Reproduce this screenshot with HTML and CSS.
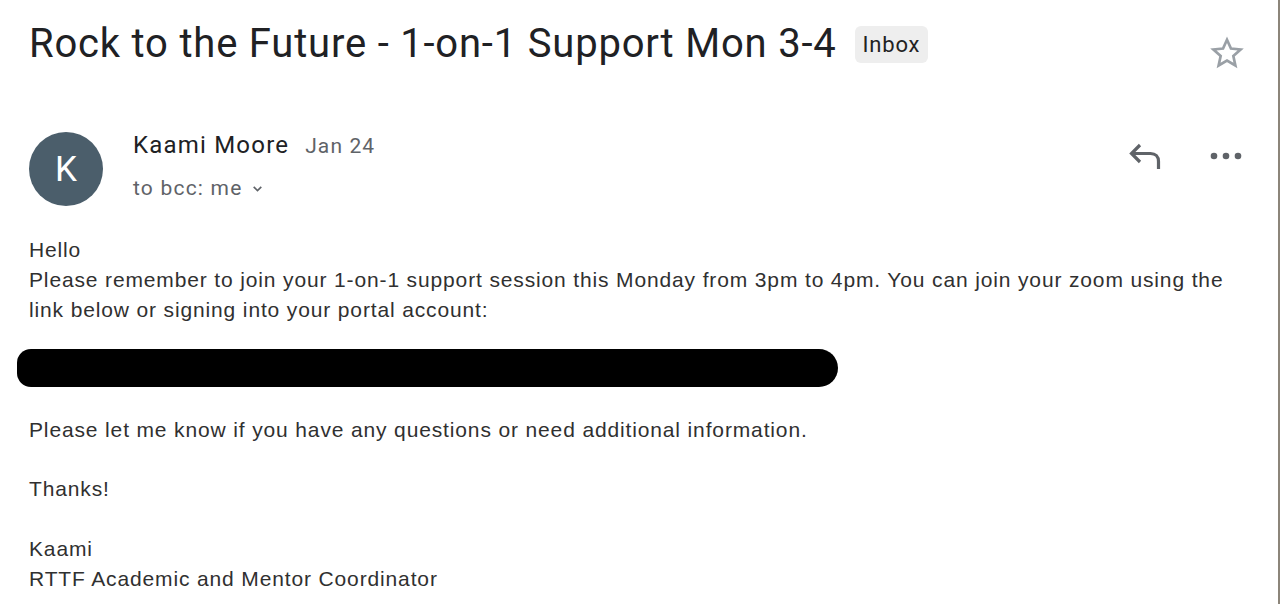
FILE: index.html
```html
<!DOCTYPE html>
<html>
<head>
<meta charset="utf-8">
<link rel="stylesheet" href="styles.css">
</head>
<body>
<div class="page">
  <div class="subject-row">
    <h1 class="subject">Rock to the Future - 1-on-1 Support Mon 3-4</h1>
    <span class="chip">Inbox</span>
    <span class="spacer"></span>
    <svg class="star" viewBox="0 0 24 24" width="38" height="38"><path d="M12 3.6l2.5 5.6 6.1.6-4.6 4.1 1.3 6-5.3-3.1-5.3 3.1 1.3-6-4.6-4.1 6.1-.6z" fill="none" stroke="#9aa0a6" stroke-width="1.7" stroke-linejoin="miter"/></svg>
  </div>
  <div class="sender-row">
    <div class="avatar">K</div>
    <div class="meta">
      <div class="from"><span class="name">Kaami Moore</span><span class="date">Jan 24</span></div>
      <div class="to">to bcc: me <svg class="caret" viewBox="0 0 12 12" width="13" height="13"><path d="M2.5 4.5l3.5 3.5 3.5-3.5" fill="none" stroke="#5f6368" stroke-width="1.5"/></svg></div>
    </div>
    <div class="actions">
      <svg class="reply" viewBox="0 0 36 30" width="36" height="30"><path d="M12 4L3.5 12.5 12 21M4 12.5h18.5c5 0 8 3 8 8v7.5" fill="none" stroke="#5f6368" stroke-width="3.2" stroke-linecap="butt" stroke-linejoin="miter"/></svg>
      <svg class="more" viewBox="0 0 32 8" width="32" height="8"><circle cx="4" cy="4" r="3.3" fill="#5f6368"/><circle cx="16" cy="4" r="3.3" fill="#5f6368"/><circle cx="28" cy="4" r="3.3" fill="#5f6368"/></svg>
    </div>
  </div>
  <div class="message">
    <p>Hello<br>Please remember to join your 1-on-1 support session this Monday from 3pm to 4pm. You can join your zoom using the link below or signing into your portal account:</p>
    <div class="redact-line"><span class="redacted"></span></div>
    <p>Please let me know if you have any questions or need additional information.</p>
    <p>Thanks!</p>
    <p>Kaami<br>RTTF Academic and Mentor Coordinator</p>
  </div>
</div>
</body>
</html>
```
FILE: styles.css
```css
html, body {
  margin: 0;
  padding: 0;
  background: #fff;
}
body {
  width: 1280px;
  height: 604px;
  overflow: hidden;
  box-sizing: border-box;
  border-right: 2px solid #8c857a;
}
.page {
  display: flex;
  flex-direction: column;
  padding: 0 36px 0 29px;
}
.subject-row {
  display: flex;
  align-items: center;
  height: 88px;
}
.subject {
  margin: 0;
  font-family: Roboto, "Open Sans", sans-serif;
  font-weight: 400;
  font-size: 40px;
  line-height: 1;
  color: #202124;
  letter-spacing: 0.8px;
}
.chip {
  margin-left: 18px;
  height: 37px;
  display: flex;
  align-items: center;
  padding: 0 8px;
  background: #eeeeee;
  border-radius: 6px;
  font-family: Roboto, sans-serif;
  font-size: 22px;
  letter-spacing: 0.8px;
  color: #222;
}
.spacer { flex: 1; }
.star {
  margin-top: 18px;
  margin-right: -4px;
}
.sender-row {
  display: flex;
  align-items: flex-start;
  margin-top: 44px;
}
.avatar {
  width: 74px;
  height: 74px;
  border-radius: 50%;
  background: #4b5e6b;
  color: #fff;
  font-family: Roboto, sans-serif;
  font-size: 35px;
  display: flex;
  align-items: center;
  justify-content: center;
  flex: none;
}
.meta {
  margin-left: 30px;
  font-family: Roboto, sans-serif;
  flex: 1;
}
.from {
  display: flex;
  align-items: baseline;
  height: 26px;
  line-height: 26px;
}
.name {
  font-size: 24px;
  letter-spacing: 1.2px;
  color: #202124;
}
.date {
  margin-left: 16px;
  font-size: 21px;
  letter-spacing: 1.1px;
  color: #5f6368;
}
.to {
  margin-top: 18px;
  font-size: 21px;
  letter-spacing: 1.2px;
  color: #5f6368;
  display: flex;
  align-items: center;
  gap: 9px;
}
.actions {
  display: flex;
  align-items: center;
  gap: 46px;
  margin-top: 9px;
}
.message {
  margin-top: 29px;
  font-family: "Liberation Sans", Arial, sans-serif;
  font-size: 21px;
  letter-spacing: 0.86px;
  line-height: 30px;
  color: #303030;
}
.message p {
  margin: 0 0 29.5px 0;
}
.redact-line {
  height: 38px;
  margin: -6px 0 28px -12px;
}
.redacted {
  display: block;
  width: 821px;
  height: 38px;
  background: #000;
  border-radius: 14px 19px 19px 14px;
}
```
